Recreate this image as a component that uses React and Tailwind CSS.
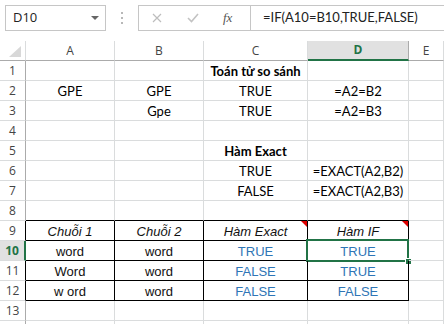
import React from "react";

const COLS = ["A", "B", "C", "D", "E"];

// cell data: [text, style]  style: "c" calibri, "b" bold calibri, "i" arial italic, "a" arial, "t" arial blue
const DATA = {
  1: { C: ["Toán tử so sánh", "b"] },
  2: { A: ["GPE", "c"], B: ["GPE", "c"], C: ["TRUE", "c"], D: ["=A2=B2", "c"] },
  3: { B: ["Gpe", "c"], C: ["TRUE", "c"], D: ["=A2=B3", "c"] },
  5: { C: ["Hàm Exact", "b"] },
  6: { C: ["TRUE", "c"], D: ["=EXACT(A2,B2)", "c"] },
  7: { C: ["FALSE", "c"], D: ["=EXACT(A2,B3)", "c"] },
  9: { A: ["Chuỗi 1", "i"], B: ["Chuỗi 2", "i"], C: ["Hàm Exact", "i"], D: ["Hàm IF", "i"] },
  10: { A: ["word", "a"], B: ["word", "a"], C: ["TRUE", "t"], D: ["TRUE", "t"] },
  11: { A: ["Word", "a"], B: ["word", "a"], C: ["FALSE", "t"], D: ["TRUE", "t"] },
  12: { A: ["w ord", "a"], B: ["word", "a"], C: ["FALSE", "t"], D: ["FALSE", "t"] },
};

const textStyle = {
  c: "font-['Lato',sans-serif] text-[13px] text-black",
  b: "font-['Lato',sans-serif] text-[13px] font-bold text-black",
  i: "font-['Liberation_Sans',Arial,sans-serif] text-[13px] italic text-[#111]",
  a: "font-['Liberation_Sans',Arial,sans-serif] text-[13px] text-[#111]",
  t: "font-['Liberation_Sans',Arial,sans-serif] text-[13px] text-[#2e75b6]",
};

const inTable = (r, c) => r >= 9 && r <= 12 && c !== "E";

function Cell({ r, c }) {
  const d = DATA[r] && DATA[r][c];
  let border = "border-r border-b border-[#dadcdd]";
  if (inTable(r, c)) border = "border-r border-b border-black";
  else if (r === 8 && c !== "E") border = "border-r border-[#dadcdd] border-b border-b-black";

  return (
    <div className={`relative h-[20px] flex items-center justify-center pt-[2px] ${border}`}>
      {d && <span className={`whitespace-nowrap ${textStyle[d[1]]}`}>{d[0]}</span>}
      {r === 9 && (c === "C" || c === "D") && (
        <div className="absolute right-0 top-0 w-0 h-0 border-l-[6px] border-l-transparent border-t-[6px] border-t-[#e00000]" />
      )}
      {r === 10 && c === "D" && (
        <>
          {/* selected cell frame + fill handle */}
          <div className="absolute -left-[2px] -top-[2px] w-[103px] h-[23px] border-2 border-[#217346]" />
          <div className="absolute left-[97px] top-[17px] w-[7px] h-[7px] bg-[#217346] border border-white" />
        </>
      )}
    </div>
  );
}

export default function App() {
  const rows = Array.from({ length: 14 }, (_, i) => i + 1);
  return (
    <div className="w-[444px] h-[324px] overflow-hidden bg-white select-none">
      {/* formula bar */}
      <div className="h-[41px] flex items-start pt-[5px] pl-[5px]">
        <div className="w-[101px] h-[26px] border border-[#c6c6c6] flex items-center justify-between pl-[7px] pr-[6px]">
          <span className="font-['Open_Sans',sans-serif] text-[13px] text-[#222]">D10</span>
          <span className="w-0 h-0 border-l-[4px] border-r-[4px] border-t-[4px] border-l-transparent border-r-transparent border-t-[#666]" />
        </div>
        <div className="w-[32px] h-[26px] flex flex-col items-center justify-center gap-[3px]">
          <span className="w-[2px] h-[2px] bg-[#b8b8b8]" />
          <span className="w-[2px] h-[2px] bg-[#b8b8b8]" />
          <span className="w-[2px] h-[2px] bg-[#b8b8b8]" />
        </div>
        <div className="flex-1 h-[26px] border border-r-0 border-[#c6c6c6] flex items-center">
          <div className="w-[111px] h-full flex items-center">
            <svg width="10" height="10" viewBox="0 0 10 10" className="ml-[13px]">
              <path d="M1 1 L9 9 M9 1 L1 9" stroke="#bdbdbd" strokeWidth="1.2" />
            </svg>
            <svg width="12" height="10" viewBox="0 0 12 10" className="ml-[25px]">
              <path d="M1 5 L4.5 8.5 L11 1" stroke="#c3c3c3" strokeWidth="1.6" fill="none" />
            </svg>
            <span className="ml-[24px] font-['Liberation_Serif',serif] italic text-[13px] text-[#555]">fx</span>
          </div>
          <div className="h-full border-l border-[#c6c6c6] flex items-center pl-[12px]">
            <span className="font-['Lato',sans-serif] text-[13px] text-[#222] whitespace-nowrap">
              =IF(A10=B10,TRUE,FALSE)
            </span>
          </div>
        </div>
      </div>

      {/* sheet grid */}
      <div className="grid grid-cols-[26px_89px_89px_104px_101px_1fr]">
        {/* header row */}
        <div className="relative h-[20px] border-r border-b border-r-[#dadcdd] border-b-[#ababab]">
          <div className="absolute right-[4px] bottom-[3px] w-0 h-0 border-l-[12px] border-l-transparent border-b-[11px] border-b-[#d8d8d8]" />
        </div>
        {COLS.map((c) =>
          c === "D" ? (
            <div
              key={c}
              className="h-[20px] flex items-center justify-center bg-[#e1e1e1] border-r border-[#ababab] border-b-2 border-b-[#217346] font-['Open_Sans',sans-serif] text-[12px] font-bold text-[#217346]"
            >
              {c}
            </div>
          ) : (
            <div
              key={c}
              className="h-[20px] flex items-center justify-center border-r border-b border-r-[#dadcdd] border-b-[#ababab] font-['Open_Sans',sans-serif] text-[12px] text-[#444]"
            >
              {c}
            </div>
          )
        )}

        {rows.map((r) => (
          <React.Fragment key={r}>
            {r === 10 ? (
              <div className="h-[20px] flex items-center justify-center bg-[#e1e1e1] border-b border-b-[#dadcdd] border-r-2 border-r-[#217346] font-['Open_Sans',sans-serif] text-[12px] font-bold text-[#217346]">
                {r}
              </div>
            ) : (
              <div
                className={`h-[20px] flex items-center justify-center border-b border-b-[#dadcdd] border-r font-['Open_Sans',sans-serif] text-[12px] text-[#444] ${
                  r >= 9 && r <= 12 ? "border-r-black" : "border-r-[#ababab]"
                }`}
              >
                {r < 14 ? r : ""}
              </div>
            )}
            {COLS.map((c) => (
              <Cell key={c} r={r} c={c} />
            ))}
          </React.Fragment>
        ))}
      </div>
    </div>
  );
}
